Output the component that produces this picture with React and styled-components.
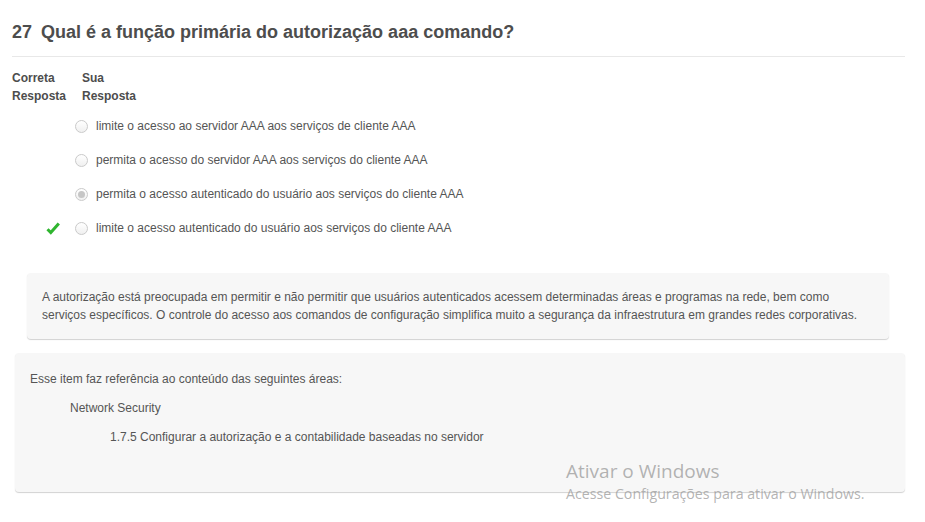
import React from "react";
import styled, { createGlobalStyle } from "styled-components";

const Global = createGlobalStyle`
  html, body { margin: 0; padding: 0; background: #fff; }
  body { font-family: "Liberation Sans", Arial, sans-serif; color: #555; }
`;

const Page = styled.div`
  position: relative;
  width: 925px;
  height: 522px;
  overflow: hidden;
  padding: 20px 20px 0 12px;
  box-sizing: border-box;
`;

const Title = styled.h2`
  margin: 0;
  font-size: 18px;
  line-height: 24px;
  font-weight: bold;
  color: #4d4d4d;
  padding-bottom: 12px;
  border-bottom: 1px solid #e8e8e8;
  width: 893px;
`;

const Num = styled.span`
  margin-right: 9px;
`;

const Head = styled.div`
  display: flex;
  margin-top: 12px;
  font-size: 12px;
  font-weight: bold;
  line-height: 18px;
  color: #4d4d4d;
`;

const HeadCol = styled.div`
  width: ${(p) => p.$w}px;
`;

const Options = styled.div`
  display: flex;
  flex-direction: column;
  gap: 16px;
  margin-top: 12px;
`;

const Row = styled.div`
  display: flex;
  align-items: center;
  height: 18px;
  font-size: 12px;
  color: #555;
`;

const MarkCell = styled.div`
  width: 63px;
  display: flex;
  justify-content: flex-start;
  padding-left: 34px;
  box-sizing: border-box;
`;

const Radio = styled.span`
  width: 13px;
  height: 13px;
  border-radius: 50%;
  border: 1px solid #cacaca;
  background: linear-gradient(#fff, #f0f0f0);
  box-sizing: border-box;
  margin-right: 8px;
  display: flex;
  align-items: center;
  justify-content: center;
  &::after {
    content: "";
    width: 7px;
    height: 7px;
    border-radius: 50%;
    background: ${(p) => (p.$checked ? "#c6c6c6" : "transparent")};
  }
`;

const Panel = styled.div`
  background: #f7f7f7;
  border-radius: 4px;
  box-shadow: 0 1px 1px rgba(0, 0, 0, 0.18);
  font-size: 12px;
  line-height: 18px;
  color: #555;
  box-sizing: border-box;
`;

const Explanation = styled(Panel)`
  margin: 36px 0 0 15px;
  width: 862px;
  padding: 15px;
`;

const Reference = styled(Panel)`
  margin: 14px 0 0 3px;
  width: 890px;
  height: 139px;
  padding: 17px 15px;
`;

const RefLine = styled.div`
  padding-left: ${(p) => p.$indent}px;
  margin-bottom: 11px;
`;

const Watermark = styled.div`
  position: absolute;
  left: 566px;
  top: 459px;
  font-family: "Open Sans", "DejaVu Sans", sans-serif;
  color: rgba(150, 150, 150, 0.72);
  pointer-events: none;
`;

const WmTitle = styled.div`
  font-size: 19px;
  line-height: 25px;
`;

const WmSub = styled.div`
  font-size: 14.2px;
  line-height: 19px;
`;

const Check = () => (
  <svg width="14" height="13" viewBox="0 0 14 13">
    <path
      d="M1.5 7.2 L4.8 10.6 L12.8 1.5"
      fill="none"
      stroke="#2fb52f"
      strokeWidth="3"
      strokeLinejoin="miter"
      strokeLinecap="butt"
    />
  </svg>
);

const options = [
  { text: "limite o acesso ao servidor AAA aos serviços de cliente AAA" },
  { text: "permita o acesso do servidor AAA aos serviços do cliente AAA" },
  { text: "permita o acesso autenticado do usuário aos serviços do cliente AAA", chosen: true },
  { text: "limite o acesso autenticado do usuário aos serviços do cliente AAA", correct: true },
];

export default function App() {
  return (
    <>
      <Global />
      <Page>
        <Title>
          <Num>27</Num>Qual é a função primária do autorização aaa comando?
        </Title>
        <Head>
          <HeadCol $w={70}>Correta<br />Resposta</HeadCol>
          <HeadCol $w={70}>Sua<br />Resposta</HeadCol>
        </Head>
        <Options>
          {options.map((o, i) => (
            <Row key={i}>
              <MarkCell>{o.correct ? <Check /> : null}</MarkCell>
              <Radio $checked={o.chosen} />
              {o.text}
            </Row>
          ))}
        </Options>
        <Explanation>
          A autorização está preocupada em permitir e não permitir que usuários autenticados acessem determinadas áreas e programas na rede, bem como serviços específicos. O controle do acesso aos comandos de configuração simplifica muito a segurança da infraestrutura em grandes redes corporativas.
        </Explanation>
        <Reference>
          <RefLine $indent={0}>Esse item faz referência ao conteúdo das seguintes áreas:</RefLine>
          <RefLine $indent={40}>Network Security</RefLine>
          <RefLine $indent={80}>1.7.5 Configurar a autorização e a contabilidade baseadas no servidor</RefLine>
        </Reference>
        <Watermark>
          <WmTitle>Ativar o Windows</WmTitle>
          <WmSub>Acesse Configurações para ativar o Windows.</WmSub>
        </Watermark>
      </Page>
    </>
  );
}
